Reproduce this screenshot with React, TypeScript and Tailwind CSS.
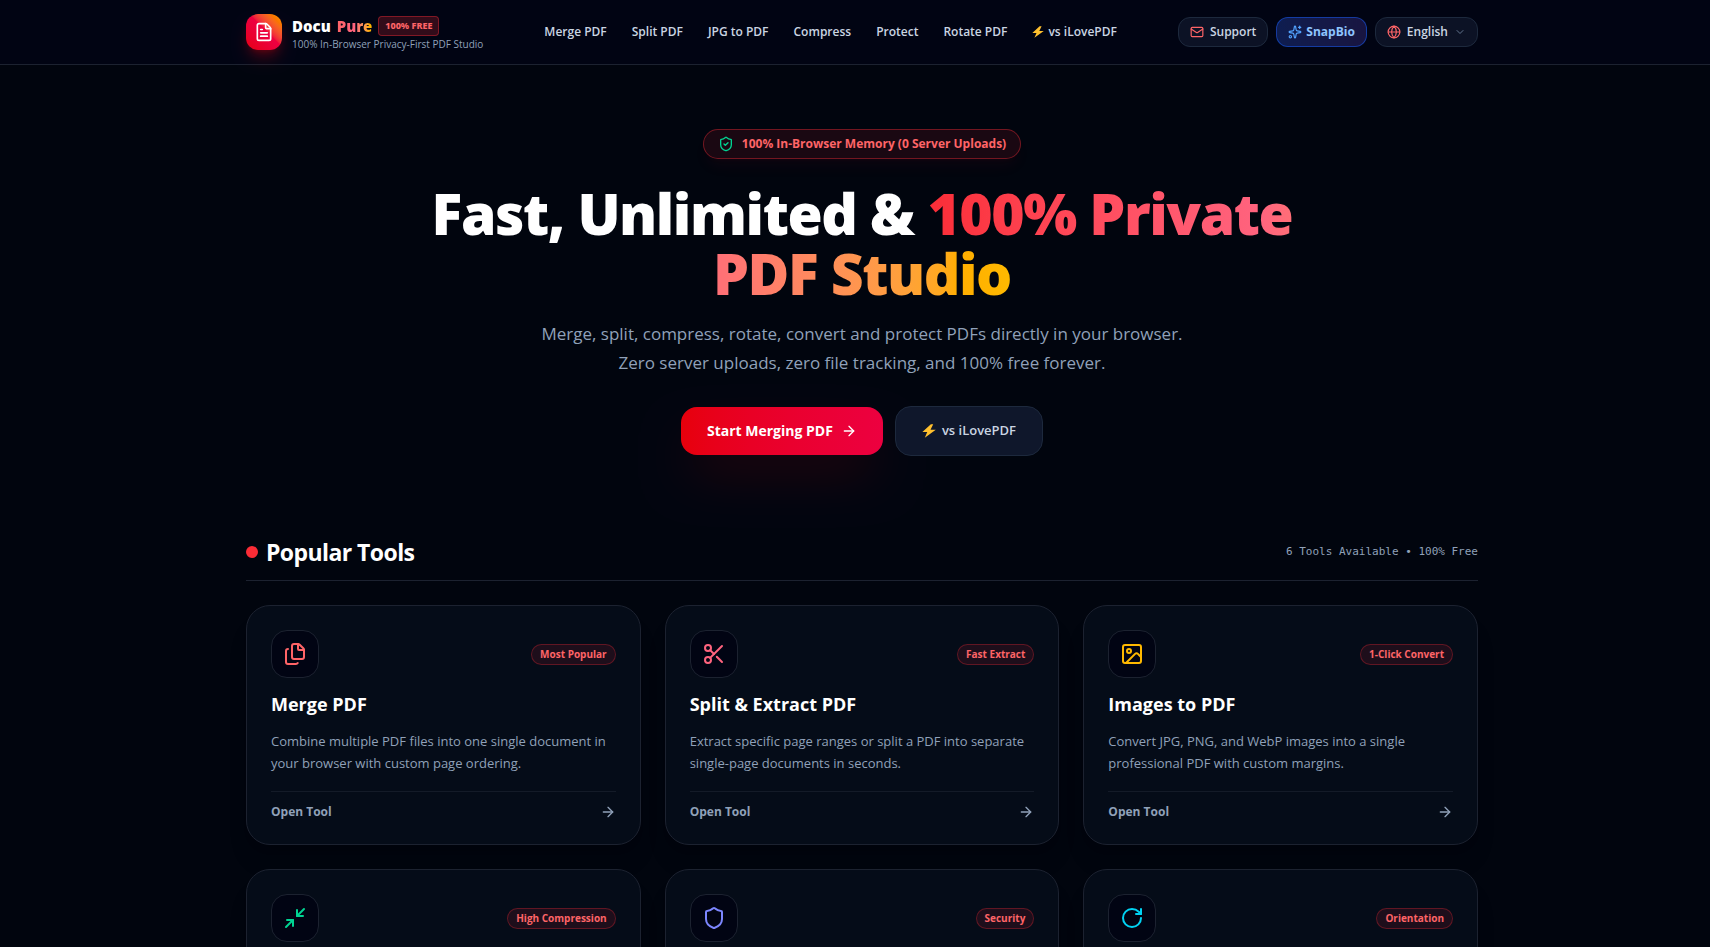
import {
  ArrowRight,
  ChevronDown,
  FileText,
  Files,
  Globe,
  Image as ImageIcon,
  Mail,
  Minimize2,
  RotateCw,
  Scissors,
  Shield,
  ShieldCheck,
  Sparkles,
  type LucideIcon
} from "lucide-react";

const navLinks = ["Merge PDF", "Split PDF", "JPG to PDF", "Compress", "Protect", "Rotate PDF"];

type Tool = {
  title: string;
  description: string;
  badge: string;
  icon: LucideIcon;
  color: string;
};

const tools: Tool[] = [
  {
    title: "Merge PDF",
    description: "Combine multiple PDF files into one single document in your browser with custom page ordering.",
    badge: "Most Popular",
    icon: Files,
    color: "text-red-400"
  },
  {
    title: "Split & Extract PDF",
    description: "Extract specific page ranges or split a PDF into separate single-page documents in seconds.",
    badge: "Fast Extract",
    icon: Scissors,
    color: "text-rose-400"
  },
  {
    title: "Images to PDF",
    description: "Convert JPG, PNG, and WebP images into a single professional PDF with custom margins.",
    badge: "1-Click Convert",
    icon: ImageIcon,
    color: "text-amber-400"
  },
  {
    title: "Compress PDF",
    description: "Reduce PDF file size while keeping the best possible quality for sharing.",
    badge: "High Compression",
    icon: Minimize2,
    color: "text-emerald-400"
  },
  {
    title: "Protect PDF",
    description: "Add a password to your PDF file and keep its contents private.",
    badge: "Security",
    icon: Shield,
    color: "text-indigo-400"
  },
  {
    title: "Rotate PDF",
    description: "Rotate single pages or whole PDF documents and save them instantly.",
    badge: "Orientation",
    icon: RotateCw,
    color: "text-cyan-400"
  }
];

function Bolt({ className }: { className: string }) {
  return (
    <svg viewBox="0 0 12 12" className={className} aria-hidden="true">
      <path d="M7.6.2.3 6.9h4.2L2.4 11.8 11.8 4.9H7.3L9.6.2z" fill="#ffc02e" />
    </svg>
  );
}

function Header() {
  return (
    <header className="border-b border-[#1c2230] bg-[#010413] pl-3.5">
      <div className="mx-auto flex h-16 max-w-7xl items-center justify-between px-6">
        <a href="#" className="flex items-center gap-2.5">
          <span className="flex size-9 items-center justify-center rounded-xl bg-linear-to-tr from-red-600 via-rose-600 to-amber-500 shadow-lg shadow-red-600/30">
            <FileText className="size-5 text-white" />
          </span>
          <span className="flex flex-col pt-1">
            <span className="flex items-center gap-1.5 font-['Noto_Sans',sans-serif] text-[15px] leading-5 font-black text-white">
              <span>Docu</span>
              <span className="bg-linear-to-r from-red-400 via-rose-400 to-amber-400 bg-clip-text text-transparent">Pure</span>
              <span className="rounded border border-red-500/40 bg-red-500/20 px-1.5 text-[9px] leading-[18px] font-extrabold text-red-400">
                100% FREE
              </span>
            </span>
            <span className="text-[10px] leading-4 text-slate-400">100% In-Browser Privacy-First PDF Studio</span>
          </span>
        </a>

        <nav className="flex items-center gap-[25px] text-xs font-semibold text-slate-300">
          {navLinks.map((label) => (
            <a key={label} href="#">
              {label}
            </a>
          ))}
          <a href="#" className="flex items-center gap-1">
            <Bolt className="size-3" />
            vs iLovePDF
          </a>
        </nav>

        <div className="flex items-center gap-2 text-xs leading-4">
          <a
            href="#"
            className="flex h-[30px] items-center gap-1.5 rounded-xl border border-slate-800 bg-slate-900/80 px-[11px] font-semibold text-slate-300"
          >
            <Mail className="size-3.5 text-red-400" />
            Support
          </a>
          <a
            href="#"
            className="flex h-[30px] items-center gap-1 rounded-xl border border-blue-600/50 bg-linear-to-r from-blue-900/50 to-indigo-950/80 px-[11px] font-bold text-blue-300"
          >
            <Sparkles className="size-3.5 text-blue-400" />
            SnapBio
          </a>
          <button className="flex h-[30px] items-center gap-1.5 rounded-xl border border-slate-800 bg-slate-900/80 px-[11px] font-semibold text-slate-300">
            <Globe className="size-3.5 text-red-400" />
            English
            <ChevronDown className="size-3 text-slate-500" />
          </button>
        </div>
      </div>
    </header>
  );
}

function Hero() {
  return (
    <section className="flex flex-col items-center px-6 pt-16 text-center">
      <div className="flex h-[30px] items-center gap-2 rounded-full border border-red-500/40 bg-red-500/10 px-3.5 text-xs font-bold text-red-400 shadow-lg shadow-red-500/5">
        <ShieldCheck className="size-4 text-emerald-400" />
        100% In-Browser Memory (0 Server Uploads)
      </div>
      <h1 className="mt-6 max-w-4xl font-['Noto_Sans',sans-serif] text-[57px] leading-[60px] font-black tracking-tight text-white">
        Fast, Unlimited &amp;{" "}
        <span className="bg-linear-to-r from-red-500 via-rose-400 to-amber-400 bg-clip-text text-transparent">
          100% Private PDF Studio
        </span>
      </h1>
      <p className="mt-4 max-w-2xl text-[17px] leading-[29px] text-slate-400">
        Merge, split, compress, rotate, convert and protect PDFs directly in your browser. Zero server uploads, zero file
        tracking, and 100% free forever.
      </p>
      <div className="mt-[29px] flex items-center gap-3">
        <a
          href="#"
          className="flex h-12 items-center gap-2 rounded-2xl bg-linear-to-r from-red-600 to-rose-600 px-[26px] text-sm font-bold text-white shadow-2xl shadow-red-600/20"
        >
          Start Merging PDF
          <ArrowRight className="size-4" />
        </a>
        <a
          href="#"
          className="flex h-[50px] items-center gap-1.5 rounded-2xl border border-slate-800 bg-slate-900 px-[26px] text-[13px] font-semibold text-slate-300"
        >
          <Bolt className="size-3.5" />
          vs iLovePDF
        </a>
      </div>
    </section>
  );
}

function ToolCard({ tool }: { tool: Tool }) {
  const Icon = tool.icon;

  return (
    <a href="#" className="block rounded-3xl border border-[#1c2230] bg-[#050c18] p-6 shadow-xl">
      <div className="flex items-center justify-between">
        <span className="flex size-12 items-center justify-center rounded-2xl border border-[#1c2230] bg-[#010413]">
          <Icon className={`size-6 ${tool.color}`} />
        </span>
        <span className="rounded-full border border-red-500/30 bg-red-500/10 px-2 text-[10px] leading-[19px] font-bold text-red-400">
          {tool.badge}
        </span>
      </div>
      <h3 className="mt-3 text-lg leading-7 font-bold text-white">{tool.title}</h3>
      <p className="mt-3 text-[13px] leading-[22px] text-slate-400">{tool.description}</p>
      <div className="mt-[17px] flex items-center justify-between border-t border-[#141b28] pt-3 text-xs font-bold text-slate-400">
        Open Tool
        <ArrowRight className="size-4" />
      </div>
    </a>
  );
}

export default function App() {
  return (
    <div className="min-h-screen bg-[#01050e] font-['Open_Sans',sans-serif]">
      <Header />
      <main className="pl-3.5">
        <Hero />
        <section className="mx-auto max-w-7xl px-6 pt-20">
          <div className="flex items-center justify-between border-b border-[#1c2230] pb-3">
            <h2 className="flex items-center gap-2 text-[23px] leading-8 font-bold tracking-tight text-white">
              <span className="size-3 rounded-full bg-red-500" />
              Popular Tools
            </h2>
            <span className="font-['DejaVu_Sans_Mono',monospace] text-[11px] text-slate-400">
              6 Tools Available • 100% Free
            </span>
          </div>
          <div className="grid grid-cols-3 gap-6 py-6">
            {tools.map((tool) => (
              <ToolCard key={tool.title} tool={tool} />
            ))}
          </div>
        </section>
      </main>
    </div>
  );
}
